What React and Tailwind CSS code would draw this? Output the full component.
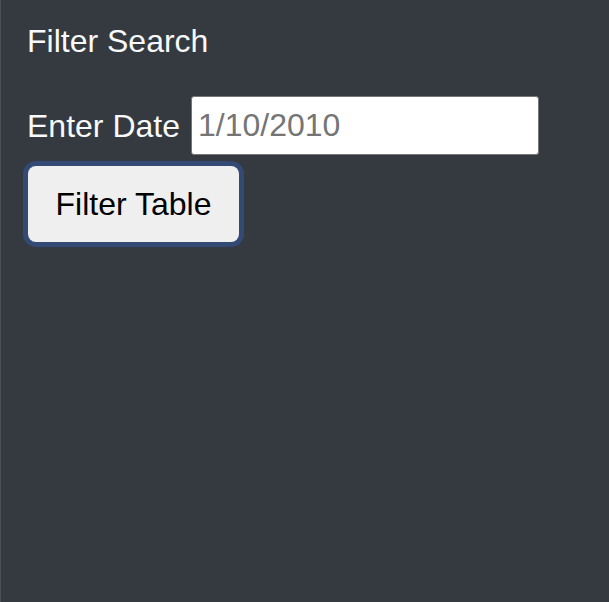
export default function App() {
  return (
    <div className="min-h-screen w-full bg-[#343a40] border-l border-[#4b5159] pl-[26px] pt-[21px] font-['Liberation_Sans',Arial,sans-serif]">
      {/* Título */}
      <h5 className="text-[32px] leading-[40px] text-[#f8f9fa]">Filter Search</h5>

      {/* Campo de data */}
      <div className="mt-[35px] flex items-center h-[59px]">
        <label className="text-[32px] leading-[40px] text-[#f8f9fa]">Enter Date</label>
        <input
          type="text"
          placeholder="1/10/2010"
          className="ml-[11px] w-[348px] h-[59px] bg-white border border-[#767676] rounded-[3px] px-[6px] text-[32px] text-black placeholder:text-[#757575] outline-none"
        />
      </div>

      {/* Botão */}
      <button className="mt-[11px] ml-px w-[211px] h-[76px] rounded-[8px] bg-[#efefef] text-black text-[32px] leading-[40px] ring-[5px] ring-[#334a74]">
        Filter Table
      </button>
    </div>
  )
}
